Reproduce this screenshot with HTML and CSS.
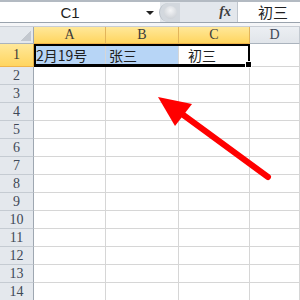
FILE: index.html
```html
<!DOCTYPE html>
<html lang="zh">
<head>
    <meta charset="UTF-8">
    <title>Sheet</title>
    <link rel="stylesheet" href="styles.css">
</head>
<body>
    <!-- Name box + formula bar -->
    <div class="formula-bar">
        <div class="name-box">
            <span class="ref">C1</span>
            <span class="drop"><span class="caret"></span></span>
        </div>
        <div class="tools">
            <span class="knob"><span class="dot"></span></span>
            <span class="fx">fx</span>
        </div>
        <div class="formula-input">初三</div>
    </div>
    <div class="bar-gap"></div>

    <!-- Sheet -->
    <div class="sheet">
        <div class="row head">
            <div class="rh corner"><span class="tri"></span></div>
            <div class="cell a sel-head">A</div>
            <div class="cell b sel-head">B</div>
            <div class="cell c sel-head">C</div>
            <div class="cell d">D</div>
        </div>
        <div class="row first">
            <div class="rh sel-head">1</div>
            <div class="cell a picked">2月19号</div>
            <div class="cell b picked pad-b">张三</div>
            <div class="cell c pad-c">初三</div>
            <div class="cell d"></div>
        </div>
        <div class="row"><div class="rh">2</div><div class="cell a"></div><div class="cell b"></div><div class="cell c"></div><div class="cell d"></div></div>
        <div class="row"><div class="rh">3</div><div class="cell a"></div><div class="cell b"></div><div class="cell c"></div><div class="cell d"></div></div>
        <div class="row"><div class="rh">4</div><div class="cell a"></div><div class="cell b"></div><div class="cell c"></div><div class="cell d"></div></div>
        <div class="row"><div class="rh">5</div><div class="cell a"></div><div class="cell b"></div><div class="cell c"></div><div class="cell d"></div></div>
        <div class="row"><div class="rh">6</div><div class="cell a"></div><div class="cell b"></div><div class="cell c"></div><div class="cell d"></div></div>
        <div class="row"><div class="rh">7</div><div class="cell a"></div><div class="cell b"></div><div class="cell c"></div><div class="cell d"></div></div>
        <div class="row"><div class="rh">8</div><div class="cell a"></div><div class="cell b"></div><div class="cell c"></div><div class="cell d"></div></div>
        <div class="row"><div class="rh">9</div><div class="cell a"></div><div class="cell b"></div><div class="cell c"></div><div class="cell d"></div></div>
        <div class="row"><div class="rh">10</div><div class="cell a"></div><div class="cell b"></div><div class="cell c"></div><div class="cell d"></div></div>
        <div class="row"><div class="rh">11</div><div class="cell a"></div><div class="cell b"></div><div class="cell c"></div><div class="cell d"></div></div>
        <div class="row"><div class="rh">12</div><div class="cell a"></div><div class="cell b"></div><div class="cell c"></div><div class="cell d"></div></div>
        <div class="row"><div class="rh">13</div><div class="cell a"></div><div class="cell b"></div><div class="cell c"></div><div class="cell d"></div></div>
        <div class="row"><div class="rh">14</div><div class="cell a"></div><div class="cell b"></div><div class="cell c"></div><div class="cell d"></div></div>

        <!-- selection frame over A1:C1 -->
        <div class="selection"><span class="handle"></span></div>
    </div>

    <!-- red pointer arrow drawn on top -->
    <svg class="pointer" width="300" height="300" viewBox="0 0 300 300">
        <line x1="268" y1="177" x2="182" y2="114" stroke="#ff0000" stroke-width="6" stroke-linecap="round"/>
        <polygon points="158,97 192,104 175,126" fill="#ff0000"/>
    </svg>
</body>
</html>
```

FILE: styles.css
```css
/* Base page */
body {
    margin: 0;
    width: 300px;
    height: 300px;
    overflow: hidden;
    position: relative;
    background: #fff;
    font-family: "Liberation Serif", "Noto Sans CJK SC", serif;
    color: #1e1e1e;
}

/* Formula bar */
.formula-bar {
    display: flex;
    height: 20px;
    border-top: 2px solid #b3bac2;
    border-bottom: 1px solid #9aa3ad;
    background: #e3e7ec;
}

.name-box {
    width: 160px;
    background: #fff;
    display: flex;
    align-items: center;
}

.name-box .ref {
    width: 140px;
    text-align: center;
    font-family: "Liberation Sans", sans-serif;
    font-size: 15px;
}

.name-box .drop {
    width: 20px;
    display: flex;
    justify-content: center;
}

.caret {
    width: 0;
    height: 0;
    border-left: 4px solid transparent;
    border-right: 4px solid transparent;
    border-top: 4px solid #222;
    margin-top: 1px;
}

.tools {
    width: 77px;
    display: flex;
    align-items: center;
}

.knob {
    width: 20px;
    height: 19px;
    margin-left: -1px;
    border-radius: 10px 0 0 10px;
    background: #d3d8de;
    border-left: 1px solid #b9c0c8;
    display: flex;
    align-items: center;
    justify-content: center;
}

.knob .dot {
    width: 13px;
    height: 13px;
    border-radius: 50%;
    background: radial-gradient(circle at 50% 35%, #f4f5f7, #c3c8ce);
}

.fx {
    margin-left: auto;
    margin-right: 6px;
    font-family: "Liberation Serif", serif;
    font-style: italic;
    font-weight: bold;
    font-size: 14px;
    color: #3c3c3c;
}

.formula-input {
    flex: 1;
    background: #fff;
    border-left: 1px solid #c0c6cd;
    padding-left: 20px;
    font-family: "Noto Sans CJK SC", sans-serif;
    font-size: 15px;
    line-height: 20px;
}

.bar-gap {
    height: 3px;
    background: #f5f6f8;
    border-bottom: 1px solid #c8cdd4;
}

/* Sheet grid */
.sheet {
    position: relative;
}

.row {
    display: flex;
    height: 18px;
}

.row.head {
    height: 17px;
}

.row.first {
    height: 23px;
}

.rh {
    width: 34px;
    box-sizing: border-box;
    background: #e4e8ed;
    border-right: 1px solid #9ea7b1;
    border-bottom: 1px solid #c5cbd2;
    text-align: center;
    font-size: 14px;
    color: #3f4957;
    display: flex;
    align-items: center;
    justify-content: center;
}

.cell {
    box-sizing: border-box;
    border-right: 1px solid #d6d6d6;
    border-bottom: 1px solid #d6d6d6;
    display: flex;
    align-items: center;
    font-family: "Noto Sans CJK SC", sans-serif;
    font-size: 14px;
    padding-left: 2px;
    white-space: nowrap;
}

.cell.a { width: 72px; }
.cell.b { width: 73px; }
.cell.c { width: 71px; }
.cell.d { flex: 1; }

.cell.pad-b { padding-left: 3px; }
.cell.pad-c { padding-left: 9px; }

.head .cell {
    justify-content: center;
    padding-left: 0;
    background: linear-gradient(#eceff3, #e1e5ea);
    border-right-color: #c3c9d0;
    border-bottom-color: #aab3bd;
    font-family: "Liberation Serif", serif;
    font-size: 14px;
    color: #3f4957;
}

.head .sel-head,
.rh.sel-head {
    background: linear-gradient(#ffe89a, #ffd55f);
    border-right-color: #e2b45a;
    border-bottom-color: #f0b44a;
    color: #3a3a3a;
}

.rh.sel-head {
    border-right-color: #e2a93e;
}

.corner {
    align-items: flex-end;
    justify-content: flex-end;
    padding: 0 2px 2px 0;
    border-bottom-color: #aab3bd;
}

.corner .tri {
    width: 10px;
    height: 10px;
    background: linear-gradient(135deg, transparent 50%, #c3c8cf 50%);
}

.cell.picked {
    background: #b7d5f6;
}

/* Selection frame */
.selection {
    position: absolute;
    left: 34px;
    top: 17px;
    width: 216px;
    height: 23px;
    box-sizing: border-box;
    border: 2px solid #000;
    border-bottom-width: 3px;
}

.selection .handle {
    position: absolute;
    right: -4px;
    bottom: -4px;
    width: 5px;
    height: 5px;
    background: #000;
    border: 1px solid #fff;
}

.pointer {
    position: absolute;
    left: 0;
    top: 0;
}
```
